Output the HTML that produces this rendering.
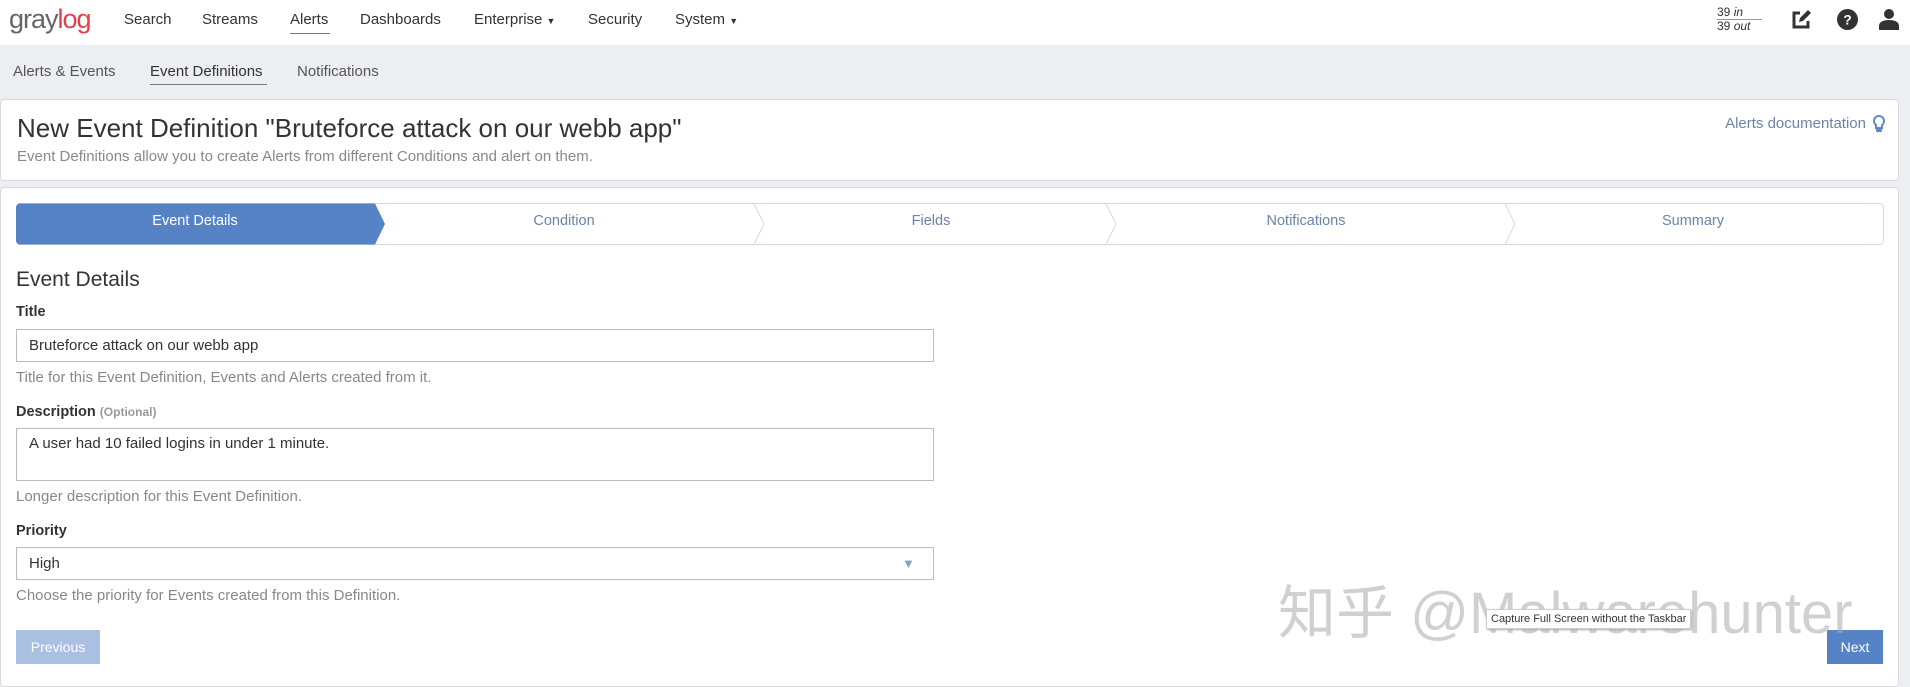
<!DOCTYPE html>
<html><head><meta charset="utf-8"><style>
*{box-sizing:border-box;margin:0;padding:0}
body{width:1910px;height:677px;overflow:hidden;background:#eceef2;font-family:"Liberation Sans",sans-serif;color:#333;position:relative}
.a{position:absolute;white-space:nowrap}
.nav{position:absolute;left:0;top:0;width:1910px;height:45px;background:#fff}
.nav .i{position:absolute;top:11px;font-size:15px;color:#333}
.sub{position:absolute;top:63px;font-size:15px;color:#555}
.panel{position:absolute;background:#fff;border:1px solid #d8dbe1;border-radius:4px}
.lbl{position:absolute;left:16px;font-size:14.5px;font-weight:bold;color:#333}
.help{position:absolute;left:16px;font-size:15px;color:#888}
.inp{position:absolute;left:16px;width:918px;border:1px solid #bbb;background:#fff;font-size:15px;color:#333;padding-left:12px}
.step{position:absolute;top:213px;font-size:14.5px;color:#6a84a8;transform:translateX(-50%)}
</style></head><body>
<div class="nav">
  <div class="a" style="left:9px;top:4px;font-size:27px;letter-spacing:-1px"><span style="color:#666">gray</span><span style="color:#e0414a">log</span></div>
  <div class="i" style="left:124px">Search</div>
  <div class="i" style="left:202px">Streams</div>
  <div class="i" style="left:290px">Alerts</div>
  <div class="a" style="left:290px;top:33px;width:40px;height:1px;background:#777"></div>
  <div class="i" style="left:360px">Dashboards</div>
  <div class="i" style="left:474px">Enterprise <span style="font-size:9px">▼</span></div>
  <div class="i" style="left:588px">Security</div>
  <div class="i" style="left:675px">System <span style="font-size:9px">▼</span></div>
  <div class="a" style="left:1717px;top:5px;font-size:12px;line-height:14px;color:#333">39 <i>in</i><br>39 <i>out</i></div>
  <div class="a" style="left:1717px;top:19px;width:45px;height:1px;background:#999"></div>
  <svg class="a" style="left:1790px;top:9px" width="22" height="22" viewBox="0 0 22 22"><path d="M10 4H4v14h14v-6" fill="none" stroke="#333" stroke-width="3"/><path d="M9 13l1-4 8-8 3 3-8 8z" fill="#333"/></svg>
  <svg class="a" style="left:1837px;top:9px" width="21" height="21" viewBox="0 0 20 20"><circle cx="10" cy="10" r="10" fill="#333"/><text x="10" y="15" font-size="13" font-weight="bold" fill="#fff" text-anchor="middle" font-family="Liberation Sans">?</text></svg>
  <svg class="a" style="left:1879px;top:8px" width="20" height="22" viewBox="0 0 20 22"><circle cx="10" cy="6" r="5" fill="#333"/><path d="M0 22v-4c0-4 4-6 10-6s10 2 10 6v4z" fill="#333"/></svg>
</div>
<div class="sub" style="left:13px">Alerts &amp; Events</div>
<div class="sub" style="left:150px;color:#333">Event Definitions</div>
<div class="a" style="left:150px;top:84px;width:117px;height:1px;background:#777"></div>
<div class="sub" style="left:297px">Notifications</div>

<div class="panel" style="left:0;top:99px;width:1899px;height:82px">
  <div class="a" style="left:16px;top:13px;font-size:26px;color:#333">New Event Definition "Bruteforce attack on our webb app"</div>
  <div class="a" style="left:16px;top:48px;font-size:15px;color:#888">Event Definitions allow you to create Alerts from different Conditions and alert on them.</div>
  <div class="a" style="right:32px;top:15px;font-size:15px;color:#6a84a8">Alerts documentation</div>
  <svg class="a" style="right:12px;top:14px" width="14" height="20" viewBox="0 0 14 20"><path d="M7 2a5 5 0 0 0-3 9v3h6v-3a5 5 0 0 0-3-9z" fill="none" stroke="#5b8ac9" stroke-width="2"/><rect x="4" y="15" width="6" height="3" rx="1" fill="#5b8ac9"/></svg>
</div>

<div class="panel" style="left:0;top:187px;width:1899px;height:500px"></div>
<svg class="a" style="left:16px;top:203px" width="1868" height="42" viewBox="0 0 1868 42">
  <rect x="0.5" y="0.5" width="1867" height="41" rx="4" fill="#fff" stroke="#d5d8de"/>
  <path d="M4 0.5H359L369 21 359 41.5H4a4 4 0 0 1-4-4V4.5a4 4 0 0 1 4-4z" fill="#5683c5"/>
  <path d="M738 0.5l10 20.5-10 20.5M1090 0.5l10 20.5-10 20.5M1489 0.5l10 20.5-10 20.5" fill="none" stroke="#d5d8de"/>
</svg>
<div class="step" style="left:195px;color:#fff">Event Details</div>
<div class="step" style="left:564px">Condition</div>
<div class="step" style="left:931px">Fields</div>
<div class="step" style="left:1306px">Notifications</div>
<div class="step" style="left:1693px">Summary</div>

<div class="a" style="left:16px;top:268px;font-size:21px;color:#333">Event Details</div>
<div class="lbl" style="top:304px">Title</div>
<div class="inp" style="top:329px;height:33px;line-height:31px">Bruteforce attack on our webb app</div>
<div class="help" style="top:369px">Title for this Event Definition, Events and Alerts created from it.</div>
<div class="lbl" style="top:404px">Description <span style="font-size:12px;color:#999">(Optional)</span></div>
<div class="inp" style="top:428px;height:53px;padding-top:6px">A user had 10 failed logins in under 1 minute.</div>
<div class="help" style="top:488px">Longer description for this Event Definition.</div>
<div class="lbl" style="top:523px">Priority</div>
<div class="inp" style="top:547px;height:33px;line-height:31px">High<span class="a" style="left:885px;top:0;color:#8aa0bd;font-size:13px">▼</span></div>
<div class="help" style="top:587px">Choose the priority for Events created from this Definition.</div>
<div class="a" style="left:16px;top:630px;width:84px;height:34px;background:#a9c0e3;color:#fff;font-size:14px;text-align:center;line-height:34px">Previous</div>
<div class="a" style="left:1827px;top:630px;width:56px;height:34px;background:#5683c5;color:#fff;font-size:14px;text-align:center;line-height:34px">Next</div>
<div class="a" style="left:1278px;top:566px;font-size:58px;color:rgba(170,170,170,0.55);font-family:'Liberation Sans','Noto Sans CJK SC',sans-serif">知乎 @Malwarehunter</div>
<div class="a" style="left:1486px;top:609px;height:20px;padding:0 4px;background:#fff;border:1px solid #ccc;font-size:11px;line-height:18px;color:#333;box-shadow:1px 1px 2px #aaa">Capture Full Screen without the Taskbar</div>
</body></html>
